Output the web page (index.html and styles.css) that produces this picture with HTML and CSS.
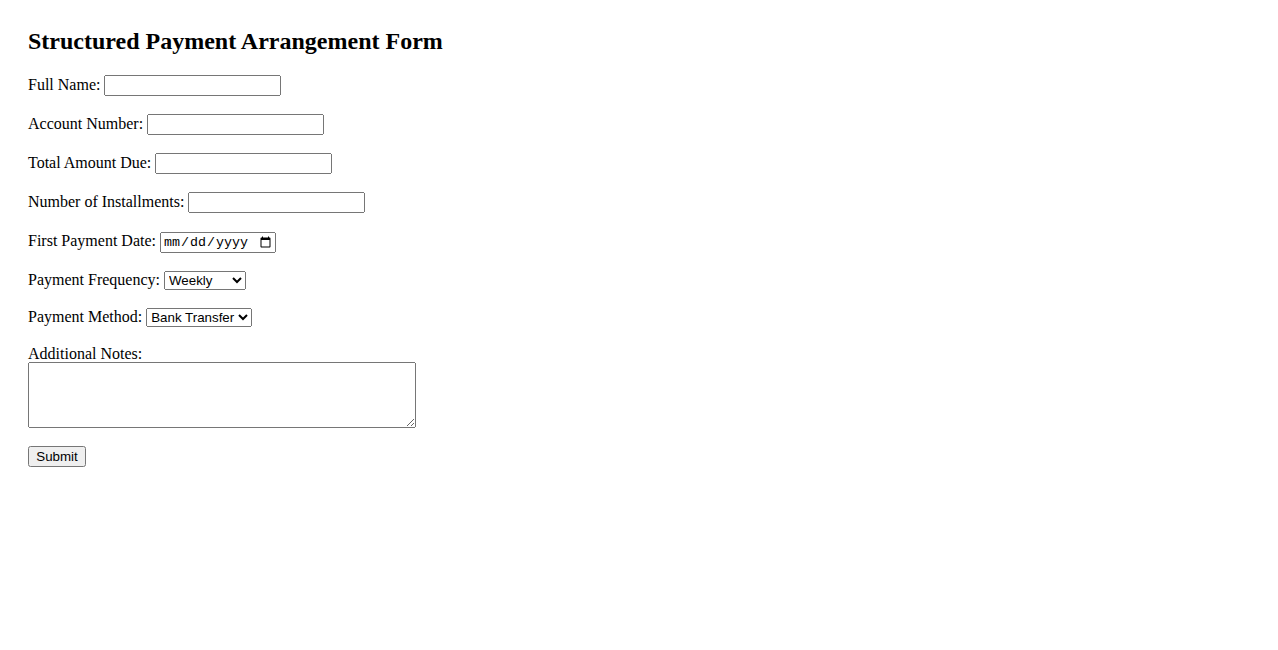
FILE: index.html
```html
<!DOCTYPE html>
<html lang="en">
<head>
<meta charset="utf-8">
<title>Structured Payment Arrangement Form</title>
<link rel="stylesheet" href="styles.css">
</head>
<body>
<div class="page">
  <h2 class="title">Structured Payment Arrangement Form</h2>
  <form class="form">
    <div class="field">
      <label for="fullName">Full Name:</label>
      <input class="text-input" type="text" id="fullName" name="fullName">
    </div>
    <div class="field">
      <label for="accountNumber">Account Number:</label>
      <input class="text-input" type="text" id="accountNumber" name="accountNumber">
    </div>
    <div class="field">
      <label for="totalAmount">Total Amount Due:</label>
      <input class="text-input" type="text" id="totalAmount" name="totalAmount">
    </div>
    <div class="field">
      <label for="installments">Number of Installments:</label>
      <input class="text-input" type="text" id="installments" name="installments">
    </div>
    <div class="field field-date">
      <label for="firstDate">First Payment Date:</label>
      <input class="date-input" type="date" id="firstDate" name="firstDate">
    </div>
    <div class="field field-select">
      <label for="frequency">Payment Frequency:</label>
      <select class="select select-frequency" id="frequency" name="frequency">
        <option>Weekly</option>
        <option>Bi-Weekly</option>
        <option>Monthly</option>
      </select>
    </div>
    <div class="field field-select field-method">
      <label for="method">Payment Method:</label>
      <select class="select select-method" id="method" name="method">
        <option>Bank Transfer</option>
        <option>Credit Card</option>
        <option>Check</option>
      </select>
    </div>
    <div class="field field-notes">
      <label class="notes-label" for="notes">Additional Notes:</label>
      <textarea class="notes" id="notes" name="notes" rows="4" cols="50"></textarea>
    </div>
    <div class="field">
      <button class="submit" type="submit">Submit</button>
    </div>
  </form>
</div>
</body>
</html>
```
FILE: styles.css
```css
html, body {
  margin: 0;
  padding: 0;
  background: #ffffff;
}

body {
  font-family: "Liberation Serif", "Times New Roman", serif;
  font-size: 16px;
  color: #000000;
}

.page {
  padding: 27px 28px;
}

.title {
  font-size: 24px;
  font-weight: bold;
  margin: 0 0 19px 0;
  line-height: 28px;
}

.field {
  margin-bottom: 17px;
  line-height: 22px;
}

.field-date {
  margin-bottom: 16px;
}

.field-select {
  margin-bottom: 15px;
}

.field-method {
  margin-bottom: 17px;
}

.text-input,
.date-input,
.select,
.submit {
  font-family: "Liberation Sans", Arial, sans-serif;
  font-size: 13.33px;
  vertical-align: baseline;
}

.text-input {
  width: 177px;
  height: 21px;
  box-sizing: border-box;
}

.date-input {
  width: 116px;
  height: 21px;
  box-sizing: border-box;
  font-family: "Liberation Mono", "DejaVu Sans Mono", monospace;
}

.select-frequency {
  width: 82px;
  height: 19px;
  box-sizing: border-box;
}

.select-method {
  width: 106px;
  height: 19px;
  box-sizing: border-box;
}

.field-notes {
  display: flex;
  flex-direction: column;
  align-items: flex-start;
  line-height: 18px;
}

.notes-label {
  margin-bottom: -1px;
}

.notes {
  width: 388px;
  height: 66px;
  box-sizing: border-box;
  margin: 0;
}

.submit {
  width: 58px;
  height: 21px;
  box-sizing: border-box;
  margin: 0;
}
```
